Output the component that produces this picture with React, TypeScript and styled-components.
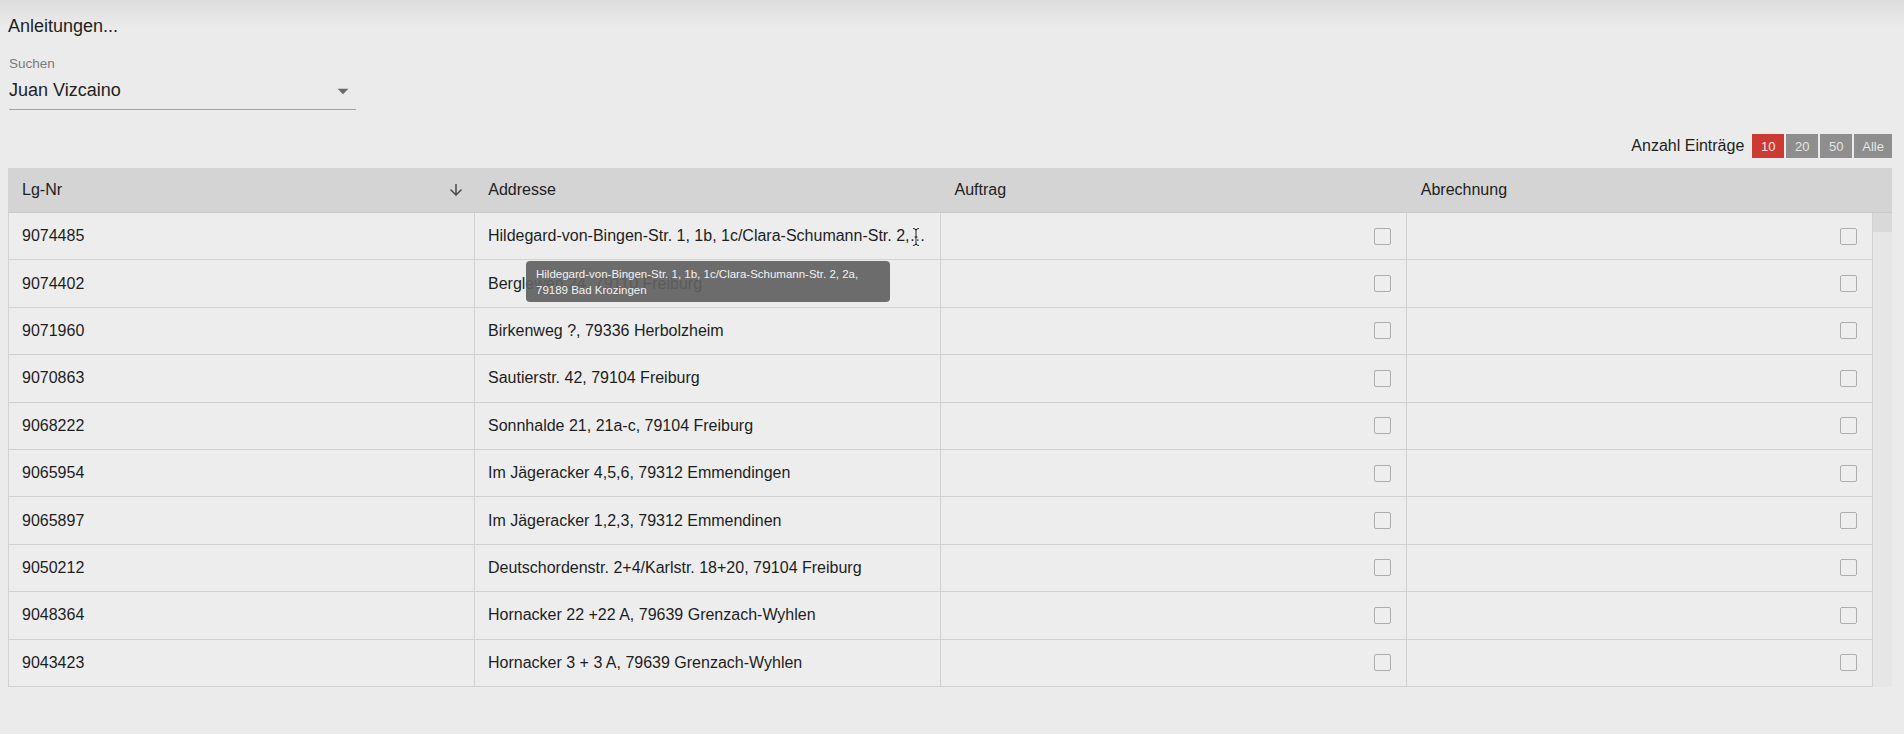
import React from "react";
import styled, { createGlobalStyle } from "styled-components";

type Row = {
  nr: string;
  address: string;
};

const rows: Row[] = [
  {
    nr: "9074485",
    address:
      "Hildegard-von-Bingen-Str. 1, 1b, 1c/Clara-Schumann-Str. 2, 2a, 79189 Bad Krozingen",
  },
  { nr: "9074402", address: "Berglewen 24, 79110 Freiburg" },
  { nr: "9071960", address: "Birkenweg ?, 79336 Herbolzheim" },
  { nr: "9070863", address: "Sautierstr. 42, 79104 Freiburg" },
  { nr: "9068222", address: "Sonnhalde 21, 21a-c, 79104 Freiburg" },
  { nr: "9065954", address: "Im Jägeracker 4,5,6, 79312 Emmendingen" },
  { nr: "9065897", address: "Im Jägeracker 1,2,3, 79312 Emmendinen" },
  { nr: "9050212", address: "Deutschordenstr. 2+4/Karlstr. 18+20, 79104 Freiburg" },
  { nr: "9048364", address: "Hornacker 22 +22 A, 79639 Grenzach-Wyhlen" },
  { nr: "9043423", address: "Hornacker 3 + 3 A, 79639 Grenzach-Wyhlen" },
];

const pageSizes = ["10", "20", "50", "Alle"];

const App = () => {
  return (
    <>
      <GlobalStyle />
      <Page>
        <Title>Anleitungen...</Title>

        <SearchField>
          <SearchLabel>Suchen</SearchLabel>
          <SelectBox>
            <SelectValue>Juan Vizcaino</SelectValue>
            <svg width="26" height="26" viewBox="0 0 24 24">
              <path d="M7 10l5 5 5-5z" fill="#6b6b6b" />
            </svg>
          </SelectBox>
        </SearchField>

        <Toolbar>
          <ToolbarLabel>Anzahl Einträge</ToolbarLabel>
          {pageSizes.map((size) => (
            <SizeBtn key={size} $active={size === "10"}>
              {size}
            </SizeBtn>
          ))}
        </Toolbar>

        <Table>
          <HeaderRow>
            <HeaderCell>
              Lg-Nr
              <svg width="18" height="18" viewBox="0 0 24 24">
                <path
                  d="M20 12l-1.41-1.41L13 16.17V4h-2v12.17l-5.58-5.59L4 12l8 8 8-8z"
                  fill="#4a4a4a"
                />
              </svg>
            </HeaderCell>
            <HeaderCell>Addresse</HeaderCell>
            <HeaderCell>Auftrag</HeaderCell>
            <HeaderCell>Abrechnung</HeaderCell>
            <span />
          </HeaderRow>

          <Body>
            <Rows>
              {rows.map((row, i) => (
                <BodyRow key={row.nr}>
                  <Cell>{row.nr}</Cell>
                  <AddressCell>
                    <CellText>{row.address}</CellText>
                    {i === 0 && (
                      <>
                        <TextCursor width="8" height="20" viewBox="0 0 8 20">
                          <path
                            d="M1 1.5 Q4 1.5 4 3.5 Q4 1.5 7 1.5 M4 3.5 V16.5 M1 18.5 Q4 18.5 4 16.5 Q4 18.5 7 18.5 M2.5 10 H5.5"
                            fill="none"
                            stroke="#fff"
                            strokeWidth="2.6"
                          />
                          <path
                            d="M1 1.5 Q4 1.5 4 3.5 Q4 1.5 7 1.5 M4 3.5 V16.5 M1 18.5 Q4 18.5 4 16.5 Q4 18.5 7 18.5 M2.5 10 H5.5"
                            fill="none"
                            stroke="#111"
                            strokeWidth="1"
                          />
                        </TextCursor>
                        <Tooltip>{row.address}</Tooltip>
                      </>
                    )}
                  </AddressCell>
                  <CheckCell>
                    <Checkbox />
                  </CheckCell>
                  <CheckCell>
                    <Checkbox />
                  </CheckCell>
                </BodyRow>
              ))}
            </Rows>
            <ScrollTrack>
              <ScrollThumb />
            </ScrollTrack>
          </Body>
        </Table>
      </Page>
    </>
  );
};

export default App;

const GlobalStyle = createGlobalStyle`
  * {
    box-sizing: border-box;
  }

  body {
    margin: 0;
    background-color: #ebebeb;
    background-image: linear-gradient(#dddddd, #ebebeb 28px);
    background-repeat: no-repeat;
    font-family: "Liberation Sans", Arial, sans-serif;
    color: #222;
  }
`;

const Page = styled.div`
  min-height: 734px;
  padding: 16px 12px 0 8px;
`;

const Title = styled.div`
  font-size: 18px;
  line-height: 21px;
  color: #1e1e1e;
`;

const SearchField = styled.div`
  width: 347px;
  margin-top: 19px;
  margin-left: 1px;
`;

const SearchLabel = styled.div`
  font-size: 13.5px;
  line-height: 16px;
  color: #7a7a7a;
`;

const SelectBox = styled.div`
  margin-top: 8px;
  height: 30px;
  padding-bottom: 8px;
  border-bottom: 1px solid #a3a3a3;
  display: flex;
  align-items: center;
  justify-content: space-between;
`;

const SelectValue = styled.span`
  font-size: 18px;
  line-height: 21px;
  color: #222;
`;

const Toolbar = styled.div`
  margin-top: 24px;
  height: 24px;
  display: flex;
  justify-content: flex-end;
  align-items: center;
  gap: 2px;
`;

const ToolbarLabel = styled.span`
  font-size: 16px;
  margin-right: 6px;
  color: #1e1e1e;
`;

const SizeBtn = styled.button<{ $active: boolean }>`
  height: 24px;
  min-width: 32px;
  padding: 0 8px;
  border: none;
  font-family: "Liberation Sans", Arial, sans-serif;
  font-size: 13px;
  background-color: ${({ $active }) => ($active ? "#cc3a34" : "#8e8e8e")};
  color: ${({ $active }) => ($active ? "#f6e6e5" : "#e4e4e4")};
`;

const Table = styled.div`
  margin-top: 10px;
  width: 1884px;
`;

const HeaderRow = styled.div`
  height: 45px;
  display: grid;
  grid-template-columns: repeat(4, 1fr) 19px;
  background-color: #d4d4d4;
  border-bottom: 1px solid #cacaca;
`;

const HeaderCell = styled.div`
  display: flex;
  align-items: center;
  justify-content: space-between;
  padding: 0 9px 0 14px;
  font-size: 16px;
  color: #222;
`;

const Body = styled.div`
  display: flex;
`;

const Rows = styled.div`
  flex: 1;
  border-left: 1px solid #d2d2d2;
`;

const BodyRow = styled.div`
  height: 47.4px;
  display: grid;
  grid-template-columns: repeat(4, 1fr);
  background-color: #ededed;
  border-bottom: 1px solid #d2d2d2;
`;

const Cell = styled.div`
  display: flex;
  align-items: center;
  min-width: 0;
  padding: 0 13px 0 13px;
  border-right: 1px solid #d2d2d2;
  font-size: 16px;
  color: #1e1e1e;
`;

const AddressCell = styled(Cell)`
  position: relative;
`;

const CellText = styled.span`
  white-space: nowrap;
  overflow: hidden;
  text-overflow: ellipsis;
`;

const CheckCell = styled(Cell)`
  justify-content: flex-end;
  padding-right: 15px;
`;

const Checkbox = styled.span`
  width: 17px;
  height: 17px;
  border: 1.5px solid #adadad;
  border-radius: 2px;
  background-color: #eeeeee;
`;

const TextCursor = styled.svg`
  position: absolute;
  top: 14px;
  left: 437px;
`;

const Tooltip = styled.div`
  position: absolute;
  top: calc(100% + 2px);
  left: 51px;
  z-index: 2;
  width: 364px;
  padding: 5px 10px 4px;
  border-radius: 4px;
  background-color: rgba(97, 97, 97, 0.92);
  color: #f2f2f2;
  font-size: 11.5px;
  line-height: 16px;
`;

const ScrollTrack = styled.div`
  width: 19px;
  background-color: #e6e6e6;
`;

const ScrollThumb = styled.div`
  height: 19px;
  background-color: #d9d9d9;
`;
